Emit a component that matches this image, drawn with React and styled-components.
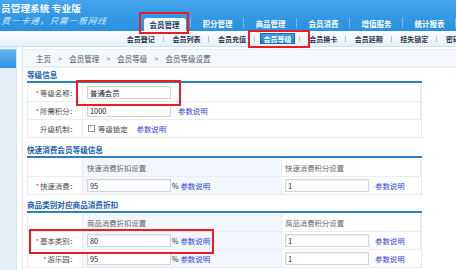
import React from "react";
import styled, { createGlobalStyle } from "styled-components";

const Global = createGlobalStyle`
  html, body { margin: 0; padding: 0; background: #ffffff; }
  body { width: 456px; height: 270px; overflow: hidden;
    font-family: "Noto Sans CJK SC", "Noto Sans", sans-serif; }
  * { box-sizing: border-box; }
`;

const Page = styled.div`
  position: relative;
  width: 456px;
  height: 270px;
  overflow: hidden;
  background: #ffffff;
`;

const Header = styled.header`
  height: 31px;
  display: flex;
  background: linear-gradient(180deg, #45a5ee 0%, #3398e4 55%, #2b90df 100%);
`;

const Brand = styled.div`
  width: 138px;
  padding: 2px 0 0 1px;
  display: flex;
  flex-direction: column;
  gap: 1px;
`;

const Title = styled.div`
  color: #ffffff;
  font-weight: 700;
  font-size: 9.6px;
  line-height: 12px;
  white-space: nowrap;
  letter-spacing: 0.1px;
`;

const Slogan = styled.div`
  color: #d4ecff;
  font-style: italic;
  font-size: 8.4px;
  line-height: 11px;
  white-space: nowrap;
  letter-spacing: 1.2px;
  transform: skewX(-8deg);
  transform-origin: left bottom;
`;

const Tabs = styled.nav`
  display: flex;
  align-items: flex-end;
`;

const TabSlot = styled.div`
  position: relative;
  width: 53px;
  height: 31px;
  display: flex;
  align-items: flex-end;
  justify-content: center;
  &::after {
    content: "";
    position: absolute;
    right: 0;
    top: 18px;
    height: 10px;
    width: 1px;
    background: rgba(255, 255, 255, 0.35);
  }
`;

const Tab = styled.div`
  width: 42px;
  height: 13px;
  border-radius: 3px 3px 0 0;
  display: flex;
  align-items: center;
  justify-content: center;
  font-size: 7.5px;
  font-weight: 700;
  white-space: nowrap;
  color: ${(p) => (p.$active ? "#173a63" : "#ffffff")};
  background: ${(p) =>
    p.$active ? "linear-gradient(180deg, #ffffff 0%, #e9f4fd 100%)" : "transparent"};
  margin-bottom: ${(p) => (p.$active ? "0" : "1px")};
`;

const SubNav = styled.nav`
  height: 16px;
  display: flex;
  align-items: center;
  padding-left: 118px;
  background: linear-gradient(180deg, #fbfdff 0%, #e6f1fb 100%);
  border-bottom: 1px solid #cfe0ef;
`;

const SubItem = styled.div`
  position: relative;
  flex: 0 0 45.6px;
  height: 16px;
  display: flex;
  align-items: center;
  justify-content: center;
  &::after {
    content: "";
    position: absolute;
    right: 0;
    top: 5px;
    width: 1px;
    height: 6px;
    background: #b8c2cc;
  }
`;

const SubLabel = styled.span`
  font-size: 7px;
  font-weight: 700;
  white-space: nowrap;
  color: ${(p) => (p.$active ? "#ffffff" : "#2a3644")};
  ${(p) =>
    p.$active &&
    `
    width: 35px;
    height: 11px;
    display: flex;
    align-items: center;
    justify-content: center;
    background: linear-gradient(180deg, #3f9fe6 0%, #1f80cf 100%);
    border: 1px solid #1b6cb3;
  `}
`;

const Body = styled.div`
  display: flex;
  gap: 5px;
  height: 223px;
`;

const Sidebar = styled.aside`
  width: 17px;
  background: #e4effa;
  padding-top: 2px;
  border-right: 1px solid #d6e4f1;
`;

const SideBlock = styled.div`
  height: 19px;
  background: linear-gradient(180deg, #62b4f1 0%, #3194e2 100%);
  border-top: 1px solid #8ccaf7;
`;

const Main = styled.main`
  flex: 1;
  padding-top: 2px;
  border-left: 1px solid #e2e8ee;
`;

const Crumbs = styled.div`
  height: 19px;
  display: flex;
  align-items: center;
  padding-left: 13px;
  background: #f3f9fe;
  border-top: 1px solid #e4edf5;
  border-bottom: 2px solid #ebedf0;
  font-size: 7.5px;
  color: #505860;
  white-space: nowrap;
`;

const CrumbSep = styled.span`
  margin: 0 7px;
  color: #7a8088;
`;

const Content = styled.div`
  padding: 0 34px 0 4px;
`;

const SectionTitle = styled.div`
  margin-top: ${(p) => p.$top}px;
  height: 13px;
  display: flex;
  align-items: center;
  font-size: 7.6px;
  font-weight: 700;
  color: #1d5fae;
  border-bottom: 2px solid #2f7fc3;
  box-sizing: content-box;
`;

const Table = styled.div`
  display: grid;
  grid-template-columns: ${(p) => p.$cols};
  border-left: 1px solid #ececec;
  border-right: 1px solid #e6e6e6;
  margin-top: 1px;
`;

const Cell = styled.div`
  height: 18px;
  display: flex;
  align-items: center;
  border-bottom: 1px solid #ececec;
  border-right: 1px solid #ececec;
  font-size: 7.4px;
  color: #444;
  white-space: nowrap;
  background: ${(p) => (p.$tint ? "#f1f7fd" : "#ffffff")};
  padding-left: ${(p) => p.$pad || 0}px;
  &:last-child { border-right: none; }
`;

const LabelCell = styled(Cell)`
  justify-content: flex-end;
  padding-right: 5px;
  color: #4a4a4a;
`;

const Star = styled.span`
  color: #ee3b1c;
  font-size: 7px;
  margin-right: 1px;
`;

const HeadText = styled.span`
  color: #666;
`;

const Input = styled.div`
  width: ${(p) => p.$w}px;
  height: 13px;
  border: 1px solid #cfd5db;
  box-shadow: inset 1px 1px 1px #eef0f2;
  display: flex;
  align-items: center;
  padding-left: 2px;
  font-size: 7.4px;
  color: #222;
  background: #ffffff;
`;

const Pct = styled.span`
  margin-left: 1px;
  font-size: 7px;
  color: #333;
`;

const Link = styled.a`
  margin-left: ${(p) => p.$gap}px;
  color: #2b3fd6;
  font-size: 7.4px;
  text-decoration: none;
`;

const Check = styled.span`
  width: 7px;
  height: 7px;
  border: 1px solid #8a939c;
  background: #fff;
  margin-right: 3px;
`;

const Mark = styled.div`
  position: absolute;
  left: ${(p) => p.$x}px;
  top: ${(p) => p.$y}px;
  width: ${(p) => p.$w}px;
  height: ${(p) => p.$h}px;
  border: 2px solid #ec1c24;
  pointer-events: none;
`;

const tabs = ["会员管理", "积分管理", "商品管理", "会员消费", "增值服务", "统计报表"];
const subs = ["会员登记", "会员列表", "会员充值", "会员等级", "会员换卡", "会员延期", "挂失锁定", "密码修改"];

function Label({ children }) {
  return (
    <LabelCell>
      <Star>*</Star>
      {children}
    </LabelCell>
  );
}

export default function App() {
  return (
    <Page>
      <Global />
      <Header>
        <Brand>
          <Title>员管理系统 专业版</Title>
          <Slogan>费一卡通，只需一根网线</Slogan>
        </Brand>
        <Tabs>
          {tabs.map((t, i) => (
            <TabSlot key={t}>
              <Tab $active={i === 0}>{t}</Tab>
            </TabSlot>
          ))}
        </Tabs>
      </Header>
      <SubNav>
        {subs.map((s, i) => (
          <SubItem key={s}>
            <SubLabel $active={i === 3}>{s}</SubLabel>
          </SubItem>
        ))}
      </SubNav>
      <Body>
        <Sidebar>
          <SideBlock />
        </Sidebar>
        <Main>
          <Crumbs>
            主页<CrumbSep>&gt;</CrumbSep>会员管理<CrumbSep>&gt;</CrumbSep>会员等级
            <CrumbSep>&gt;</CrumbSep>会员等级设置
          </Crumbs>
          <Content>
            <SectionTitle $top={0}>等级信息</SectionTitle>
            <Table $cols="55px 1fr">
              <Label>等级名称：</Label>
              <Cell $pad={4}>
                <Input $w={84}>普通会员</Input>
              </Cell>
              <Label>所需积分：</Label>
              <Cell $pad={4}>
                <Input $w={84}>1000</Input>
                <Link $gap={7}>参数说明</Link>
              </Cell>
              <LabelCell>升级机制：</LabelCell>
              <Cell $pad={5}>
                <Check />
                等级锁定
                <Link $gap={9}>参数说明</Link>
              </Cell>
            </Table>

            <SectionTitle $top={5}>快速消费会员等级信息</SectionTitle>
            <Table $cols="55px 199px 1fr">
              <LabelCell />
              <Cell $pad={4} $tint>
                <HeadText>快速消费折扣设置</HeadText>
              </Cell>
              <Cell $pad={3}>
                <HeadText>快速消费积分设置</HeadText>
              </Cell>
              <Label>快速消费：</Label>
              <Cell $pad={4} $tint>
                <Input $w={84}>95</Input>
                <Pct>%</Pct>
                <Link $gap={2}>参数说明</Link>
              </Cell>
              <Cell $pad={3}>
                <Input $w={84}>1</Input>
                <Link $gap={6}>参数说明</Link>
              </Cell>
            </Table>

            <SectionTitle $top={3}>商品类别对应商品消费折扣</SectionTitle>
            <Table $cols="55px 199px 1fr">
              <LabelCell />
              <Cell $pad={4} $tint>
                <HeadText>商品消费折扣设置</HeadText>
              </Cell>
              <Cell $pad={3}>
                <HeadText>商品消费积分设置</HeadText>
              </Cell>
              <Label>基本类别：</Label>
              <Cell $pad={4} $tint>
                <Input $w={84}>80</Input>
                <Pct>%</Pct>
                <Link $gap={2}>参数说明</Link>
              </Cell>
              <Cell $pad={3}>
                <Input $w={84}>1</Input>
                <Link $gap={6}>参数说明</Link>
              </Cell>
              <Label>游乐园：</Label>
              <Cell $pad={4} $tint>
                <Input $w={84}>95</Input>
                <Pct>%</Pct>
                <Link $gap={2}>参数说明</Link>
              </Cell>
              <Cell $pad={3}>
                <Input $w={84}>1</Input>
                <Link $gap={6}>参数说明</Link>
              </Cell>
            </Table>
          </Content>
        </Main>
      </Body>
      <Mark $x={139} $y={12} $w={50} $h={22} />
      <Mark $x={248} $y={30} $w={62} $h={18} />
      <Mark $x={76} $y={80} $w={105} $h={26} />
      <Mark $x={29} $y={229} $w={185} $h={25} />
    </Page>
  );
}
